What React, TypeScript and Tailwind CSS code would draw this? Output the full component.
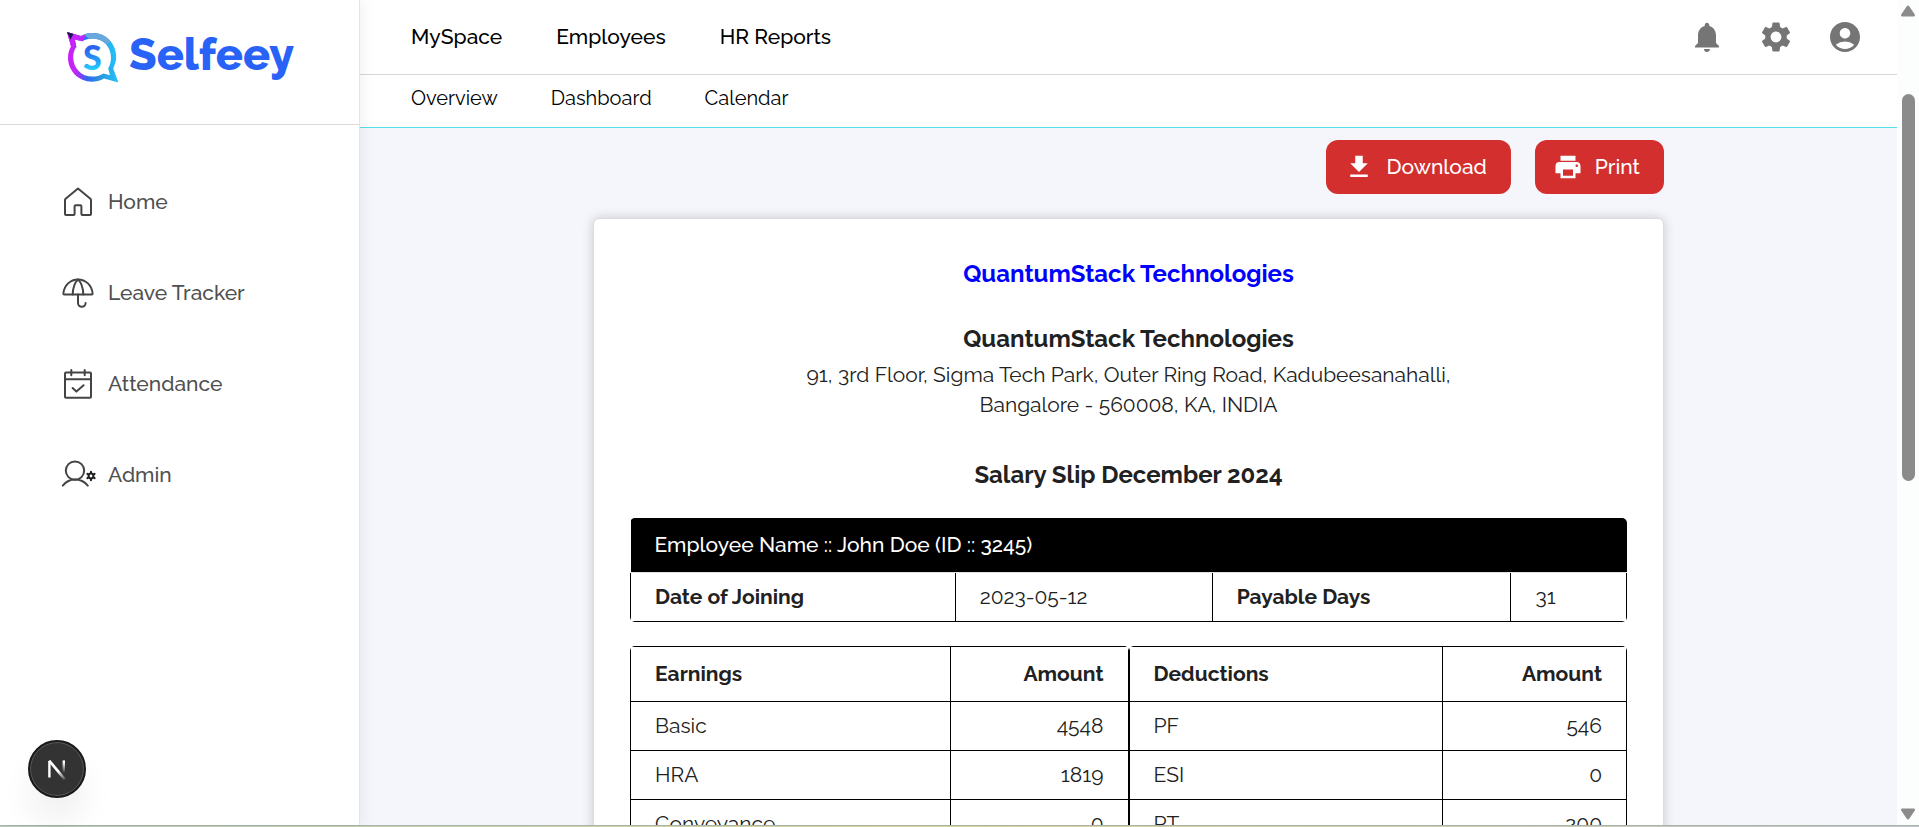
import React from 'react';
import { MdAccountCircle, MdDownload, MdNotifications, MdPrint, MdSettings } from 'react-icons/md';

const TOP_LINKS = ['MySpace', 'Employees', 'HR Reports'];
const SUB_LINKS = ['Overview', 'Dashboard', 'Calendar'];

type Line = [label: string, amount: number];

const EARNINGS: Line[] = [
  ['Basic', 4548],
  ['HRA', 1819],
  ['Conveyance', 0],
];

const DEDUCTIONS: Line[] = [
  ['PF', 546],
  ['ESI', 0],
  ['PT', 200],
];

const MenuIcon: React.FC<{ children: React.ReactNode }> = ({ children }) => (
  <svg
    viewBox="0 0 34 34"
    className="w-[34px] h-[34px] shrink-0 overflow-visible"
    fill="none"
    stroke="#444444"
    strokeWidth="2"
    strokeLinecap="round"
    strokeLinejoin="round"
    aria-hidden="true"
  >
    {children}
  </svg>
);

const MENU = [
  {
    label: 'Home',
    icon: (
      <MenuIcon>
        <path d="M17 3.6 L4.6 13.8 Q4 14.4 4 15.2 V29 Q4 30 5 30 H12.6 Q13.6 30 13.6 29 V21.2 Q13.6 20.2 14.6 20.2 H19.4 Q20.4 20.2 20.4 21.2 V29 Q20.4 30 21.4 30 H29 Q30 30 30 29 V15.2 Q30 14.4 29.4 13.8 Z" />
      </MenuIcon>
    ),
  },
  {
    label: 'Leave Tracker',
    icon: (
      <MenuIcon>
        <path d="M3.2 18.4 Q2.2 18.4 2.4 17.2 C3.2 9.4 9.2 3.4 17 3.4 C24.8 3.4 30.8 9.4 31.6 17.2 Q31.8 18.4 30.8 18.4 Z" />
        <path d="M17 3.4 C13.4 7 11.9 12 11.7 18.4 M17 3.4 C20.6 7 22.1 12 22.3 18.4" />
        <path d="M17 18.4 V27 A3.8 3.8 0 0 0 24.6 27" />
      </MenuIcon>
    ),
  },
  {
    label: 'Attendance',
    icon: (
      <MenuIcon>
        <rect x="4" y="5.4" width="26" height="25.4" rx="1" />
        <path d="M4 12.2 H30 M10.3 3 V8.2 M23.7 3 V8.2 M11.6 21 L15.4 24.6 L22.6 18.2" />
      </MenuIcon>
    ),
  },
  {
    label: 'Admin',
    icon: (
      <MenuIcon>
        <circle cx="14" cy="12.6" r="9.2" />
        <path d="M1.8 27.6 C5 23.8 9 21.6 14 21.6 C19.2 21.6 23.6 23.8 26.8 27.6" />
        <circle cx="30" cy="18" r="2.4" stroke="#1f1f1f" />
        <path
          d="M30 14.8 V13.8 M30 21.2 V22.2 M27.2 16.4 L26.4 15.9 M32.8 16.4 L33.6 15.9 M27.2 19.6 L26.4 20.1 M32.8 19.6 L33.6 20.1"
          stroke="#1f1f1f"
        />
      </MenuIcon>
    ),
  },
];

const Logo: React.FC = () => (
  <a href="#" className="flex items-start gap-2.5">
    <svg viewBox="0 0 52 51" className="w-[52px] h-[51px]" aria-hidden="true">
      <defs>
        <linearGradient id="bubble" gradientUnits="userSpaceOnUse" x1="2" y1="30" x2="50" y2="26">
          <stop offset="0.1" stopColor="#c822fb" />
          <stop offset="0.2" stopColor="#8a3df8" />
          <stop offset="0.34" stopColor="#2f66f2" />
          <stop offset="0.6" stopColor="#2b93dc" />
          <stop offset="1" stopColor="#22c4fb" />
        </linearGradient>
        <linearGradient id="bubbleS" x1="0" y1="0" x2="0" y2="1">
          <stop offset="0.35" stopColor="#2b66ee" />
          <stop offset="0.85" stopColor="#22d3ff" />
        </linearGradient>
      </defs>
      <path
        fill="url(#bubble)"
        fillRule="evenodd"
        d="M0 0 L14 4 C18 1.6 22 1 26 1 C39 1 49.2 11.6 49.2 25 C49.2 29 47.8 33 46.2 36.4 L51.4 50.4 L37 46.6 C33 48.8 29 49.8 25 49.8 C11.6 49.8 1 39 1 25.6 C1 21.6 2 17.8 4 14.6 Z M9.4 15 C7 18 6.2 21.6 6.2 25.4 C6.2 36 14.6 44.6 25.2 44.6 C29 44.6 32.4 43.6 36.4 41.4 L43 43.2 L41.2 36.4 C43 33 44 29.2 44 25.4 C44 14.8 36 6.4 25.6 6.4 C22 6.4 18.4 7.4 15.4 9.2 L7.8 7.6 Z"
      />
      <path fill="#6aa7dc" d="M17 2.6 C20 1.4 23 1 26 1 C33 1 39.4 4.2 43.6 9.2 L39.8 12.6 C36.4 8.8 31.4 6.4 25.6 6.4 L22 6.8 Z" />
      <path fill="#c822fb" d="M0 0 L14 4 L18.6 3 L15.4 9.2 L7.8 7.6 L9.4 15 L4 14.6 Z" />
      <path fill="#1c1646" d="M0 0 L6.4 2 L3.4 7.6 Z" />
      <text x="25.4" y="37.6" textAnchor="middle" fill="url(#bubbleS)" className="font-['Lato',sans-serif] font-black text-[34px]">
        S
      </text>
    </svg>
    <span className="font-extrabold text-[45px] leading-[46px] text-[#2962f6]">Selfeey</span>
  </a>
);

const Sidebar: React.FC = () => (
  <aside className="relative z-10 w-[360px] shrink-0 flex flex-col bg-white border-r border-[#e3e4e8] shadow-[4px_0_12px_rgba(0,0,0,0.05)]">
    <div className="h-[125px] shrink-0 flex items-start pt-8 pl-[67px] border-b border-[#dadada]">
      <Logo />
    </div>
    <nav className="pt-[31px]">
      {MENU.map(({ label, icon }) => (
        <a key={label} href="#" className="flex items-center gap-[13px] h-[91px] pl-[61px] text-[21px] font-medium text-[#505050]">
          {icon}
          {label}
        </a>
      ))}
    </nav>
  </aside>
);

const Header: React.FC = () => (
  <header className="shrink-0 bg-white text-black">
    <div className="h-[75px] flex items-center justify-between pl-[51px] pr-[34px] border-b border-[#d4d6d8]">
      <nav className="flex gap-[54px] text-[21px] font-medium">
        {TOP_LINKS.map((label) => (
          <a key={label} href="#">{label}</a>
        ))}
      </nav>
      <div className="flex gap-[33px] text-[#757575]">
        <button aria-label="Notifications"><MdNotifications size={36} /></button>
        <button aria-label="Settings"><MdSettings size={36} /></button>
        <button aria-label="Account"><MdAccountCircle size={36} /></button>
      </div>
    </div>
    <nav className="h-[53px] flex items-center gap-[53px] pl-[51px] pb-1.5 text-[20px] border-b border-[#55e2ee]">
      {SUB_LINKS.map((label) => (
        <a key={label} href="#">{label}</a>
      ))}
    </nav>
  </header>
);

interface AmountTableProps {
  title: string;
  lines: Line[];
  labelWidth: string;
}

const AmountTable: React.FC<AmountTableProps> = ({ title, lines, labelWidth }) => (
  <div className="flex-1 overflow-hidden rounded-[5px]">
    <table className="w-full table-fixed border-collapse">
      <colgroup>
        <col className={labelWidth} />
        <col />
      </colgroup>
      <thead>
        <tr>
          <th className="border border-black px-6 py-3 text-left font-bold">{title}</th>
          <th className="border border-black px-6 py-3 text-right font-bold">Amount</th>
        </tr>
      </thead>
      <tbody>
        {lines.map(([label, amount]) => (
          <tr key={label}>
            <td className="border border-black px-6 py-[9px]">{label}</td>
            <td className="border border-black px-6 py-[9px] text-right">{amount}</td>
          </tr>
        ))}
      </tbody>
    </table>
  </div>
);

const SalarySlip: React.FC = () => (
  <article className="rounded-md border border-[#dcdcdc] bg-white px-9 pt-[37px] pb-9 shadow-[0_0_12px_rgba(0,0,0,0.18)] text-[21px] leading-[30px] text-[#212121]">
    <div className="text-center">
      <h1 className="text-[24px] leading-9 font-bold text-[#0000ff]">QuantumStack Technologies</h1>
      <h2 className="mt-[29px] text-[24px] leading-9 font-bold">QuantumStack Technologies</h2>
      <p className="mt-[3px]">
        91, 3rd Floor, Sigma Tech Park, Outer Ring Road, Kadubeesanahalli,
        <br />
        Bangalore - 560008, KA, INDIA
      </p>
      <h2 className="mt-[37px] text-[24px] leading-9 font-bold">Salary Slip December 2024</h2>
    </div>

    {/* Employee */}
    <div className="mt-[25px] overflow-hidden rounded-[5px]">
      <table className="w-full table-fixed border-collapse">
        <colgroup>
          <col className="w-[32.6%]" />
          <col className="w-[25.8%]" />
          <col className="w-[30%]" />
          <col />
        </colgroup>
        <thead>
          <tr>
            <th colSpan={4} className="border-b border-[#e0e0e0] bg-black px-6 py-3 text-left font-medium text-white">
              Employee Name :: John Doe (ID :: 3245)
            </th>
          </tr>
        </thead>
        <tbody>
          <tr>
            <th scope="row" className="border border-black px-6 py-[9px] text-left font-bold">Date of Joining</th>
            <td className="border border-black px-6 py-[9px]">2023-05-12</td>
            <th scope="row" className="border border-black px-6 py-[9px] text-left font-bold">Payable Days</th>
            <td className="border border-black px-6 py-[9px]">31</td>
          </tr>
        </tbody>
      </table>
    </div>

    {/* Earnings and deductions */}
    <div className="mt-6 flex">
      <AmountTable title="Earnings" lines={EARNINGS} labelWidth="w-[64.4%]" />
      <AmountTable title="Deductions" lines={DEDUCTIONS} labelWidth="w-[63%]" />
    </div>
  </article>
);

const ScrollRail: React.FC = () => (
  <div className="w-[22px] shrink-0 flex flex-col items-center bg-[#fcfdfd] py-[5px]" aria-hidden="true">
    <svg viewBox="0 0 16 12" className="w-4 h-3" fill="#8b8b8b">
      <path d="M8 0.6 Q8.8 0.6 9.4 1.6 L14.8 9.6 Q15.6 11.4 14 11.4 H2 Q0.4 11.4 1.2 9.6 L6.6 1.6 Q7.2 0.6 8 0.6 Z" />
    </svg>
    <div className="flex-1 pt-[77px]">
      <div className="w-[13px] h-[387px] rounded-full bg-[#8b8b8b]" />
    </div>
    <svg viewBox="0 0 16 12" className="w-4 h-3" fill="#8b8b8b">
      <path d="M8 11.4 Q8.8 11.4 9.4 10.4 L14.8 2.4 Q15.6 0.6 14 0.6 H2 Q0.4 0.6 1.2 2.4 L6.6 10.4 Q7.2 11.4 8 11.4 Z" />
    </svg>
  </div>
);

const DevBadge: React.FC = () => (
  <button
    aria-label="Open developer tools"
    className="fixed left-7 bottom-[29px] z-20 w-[58px] h-[58px] rounded-full border-2 border-[#1a1a1a] bg-[#333333] shadow-[inset_0_0_0_1px_#5a5a5a,0_24px_32px_rgba(0,0,0,0.06)] flex items-center justify-center"
  >
    <svg viewBox="0 0 24 24" className="w-6 h-6" fill="none" aria-hidden="true">
      <defs>
        <linearGradient id="stem" x1="0" y1="3" x2="0" y2="16" gradientUnits="userSpaceOnUse">
          <stop offset="0.2" stopColor="#ffffff" />
          <stop offset="1" stopColor="#ffffff" stopOpacity="0" />
        </linearGradient>
        <linearGradient id="slash" x1="14" y1="14" x2="21" y2="23" gradientUnits="userSpaceOnUse">
          <stop offset="0" stopColor="#ffffff" />
          <stop offset="1" stopColor="#ffffff" stopOpacity="0" />
        </linearGradient>
      </defs>
      <path d="M4.4 20.5 V4" stroke="#ffffff" strokeWidth="2.4" />
      <path d="M4.2 3.6 L20 22.6" stroke="url(#slash)" strokeWidth="2.6" />
      <rect x="17.6" y="3.4" width="2.4" height="13" fill="url(#stem)" />
    </svg>
  </button>
);

export default function App() {
  return (
    <div className="h-screen flex flex-col overflow-hidden font-['Raleway','Open_Sans',sans-serif]">
      <div className="flex-1 min-h-0 flex">
        <Sidebar />
        <div className="flex-1 min-w-0 flex flex-col bg-[#f5f6fb]">
          <Header />
          <main className="flex-1 min-h-0 overflow-hidden">
            <div className="mx-auto w-full max-w-[1071px] pt-3">
              <div className="flex justify-end gap-6 text-[21px] font-medium text-white">
                <button className="flex items-center gap-3 h-[54px] pl-[18px] pr-6 rounded-xl bg-[#d32f2f]">
                  <MdDownload size={30} />
                  Download
                </button>
                <button className="flex items-center gap-3 h-[54px] pl-[18px] pr-6 rounded-xl bg-[#d32f2f]">
                  <MdPrint size={30} />
                  Print
                </button>
              </div>
              <div className="mt-6">
                <SalarySlip />
              </div>
            </div>
          </main>
        </div>
        <ScrollRail />
      </div>
      <div className="h-0.5 shrink-0 border-t border-[#a9b5ab] bg-linear-to-r from-[#b9ccbd] via-[#d8d592] to-[#c4c4cc]" />
      <DevBadge />
    </div>
  );
}
